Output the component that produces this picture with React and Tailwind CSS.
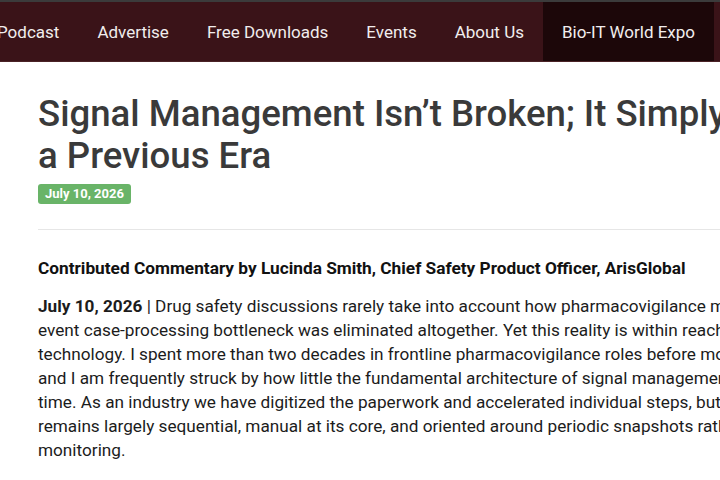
import React from 'react';

const navItems = ['Podcast', 'Advertise', 'Free Downloads', 'Events', 'About Us'];

const bodyLines = [
  'event case-processing bottleneck was eliminated altogether. Yet this reality is within reach, thanks to advances in',
  'technology. I spent more than two decades in frontline pharmacovigilance roles before moving into product leadership,',
  'and I am frequently struck by how little the fundamental architecture of signal management has changed over that',
  'time. As an industry we have digitized the paperwork and accelerated individual steps, but the overall process',
  'remains largely sequential, manual at its core, and oriented around periodic snapshots rather than continuous',
  'monitoring.',
];

export default function App() {
  return (
    <div
      className="w-[720px] h-[480px] overflow-hidden bg-white"
      style={{ fontFamily: 'Roboto, "Noto Sans", sans-serif' }}
    >
      {/* Top navigation */}
      <nav className="border-t-2 border-[#3b3b3b] bg-[#3a1318] border-b border-b-[#4a2226]">
        <ul className="flex h-[59px] items-stretch -ml-[22px] w-[1100px] pt-[2px]">
          {navItems.map((item) => (
            <li key={item} className="flex items-center px-[19px] text-[17px] text-[#f1eded] whitespace-nowrap">
              {item}
            </li>
          ))}
          <li className="flex items-center -mt-[2px] pt-[2px] px-[19px] text-[17px] text-[#f1eded] bg-[#1c0709] whitespace-nowrap">
            Bio-IT World Expo
          </li>
        </ul>
      </nav>

      {/* Article */}
      <article className="w-[1100px] pl-[38px] pt-[31px]">
        <h1 className="text-[36.6px] leading-[42px] font-medium text-[#3a3a3a] whitespace-nowrap">
          Signal Management Isn’t Broken; It Simply Belongs to
          <br />
          a Previous Era
        </h1>
        <div className="mt-[4px] mb-[24px]">
          <span className="inline-block rounded-[3px] bg-[#69b468] px-[7px] py-[2px] text-[13px] leading-[16px] font-bold text-white">
            July 10, 2026
          </span>
        </div>
        <hr className="border-0 border-t border-[#e6e6e6]" />

        <p className="mt-[26px] text-[17.25px] leading-[24px] font-bold text-[#111] whitespace-nowrap">
          Contributed Commentary by Lucinda Smith, Chief Safety Product Officer, ArisGlobal
        </p>

        <div className="mt-[14px] text-[17.2px] leading-[24px] text-[#1c1c1c] whitespace-nowrap">
          <div>
            <strong className="font-bold">July 10, 2026</strong> | Drug safety discussions rarely take into account how
            pharmacovigilance might look if the adverse
          </div>
          {bodyLines.map((line) => (
            <div key={line}>{line}</div>
          ))}
        </div>
      </article>
    </div>
  );
}
